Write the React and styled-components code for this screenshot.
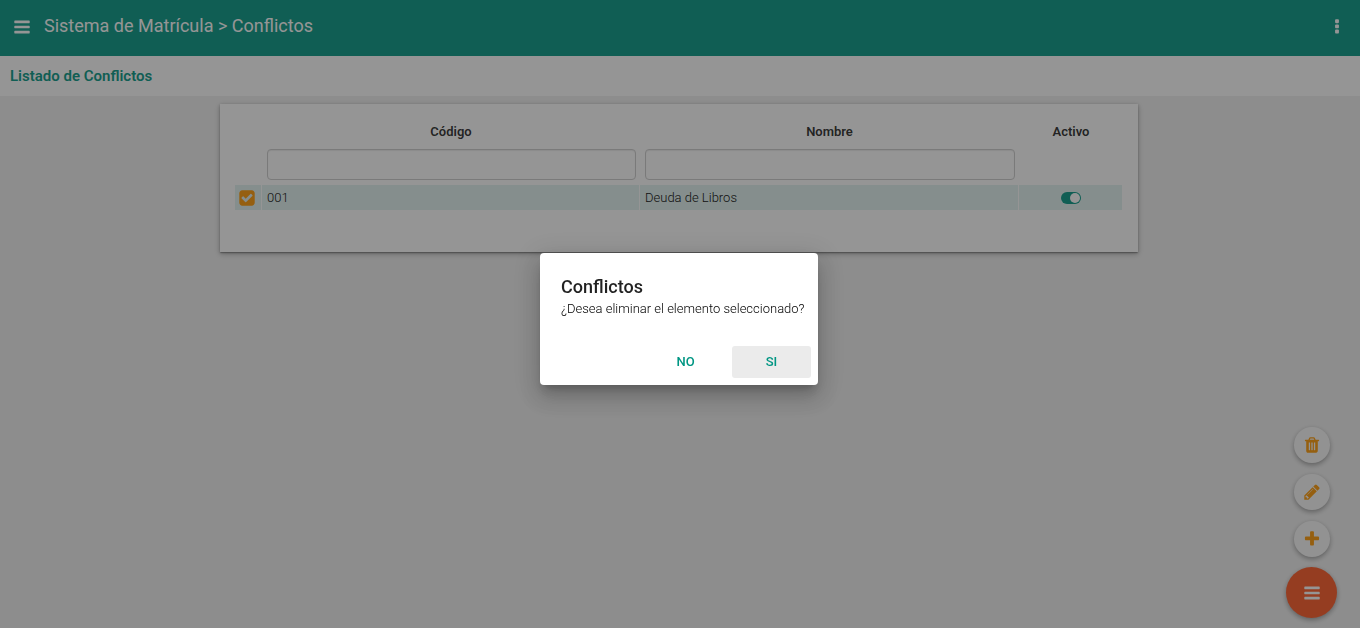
import React, { useState } from "react";
import styled, { createGlobalStyle } from "styled-components";

const teal = "#009683";
const amber = "#ff9800";

const GlobalStyle = createGlobalStyle`
  *, *::before, *::after { box-sizing: border-box; }
  body {
    margin: 0;
    background: #f0f0f0;
    color: rgba(0, 0, 0, 0.87);
    font-family: Roboto, "Liberation Sans", sans-serif;
    font-size: 13px;
    line-height: 20px;
  }
  button, input { font: inherit; }
`;

const Toolbar = styled.header`
  display: flex;
  align-items: center;
  gap: 8px;
  height: 56px;
  padding: 0 14px 2px 13px;
  background: ${teal};
  color: #fff;
`;

const IconButton = styled.button`
  display: flex;
  padding: 0;
  border: 0;
  background: none;
  color: inherit;
  cursor: pointer;
`;

const PageTitle = styled.h1`
  flex: 1;
  margin: 0;
  padding: 0 5px 2px;
  font-size: 18px;
  font-weight: 400;
  line-height: 24px;
`;

const SubHeader = styled.div`
  display: flex;
  align-items: center;
  height: 40px;
  padding: 0 10px;
  background: #fff;
`;

const SubTitle = styled.h2`
  margin: 0;
  color: ${teal};
  font-size: 15px;
  font-weight: 600;
  line-height: 20px;
`;

const Main = styled.main`
  padding: 8px 10px 8px 8px;
`;

const Card = styled.section`
  max-width: 918px;
  margin: 0 auto;
  padding: 16px 16px 42px 15px;
  background: #fff;
  box-shadow: 0 1px 3px rgba(0, 0, 0, 0.2), 0 1px 1px rgba(0, 0, 0, 0.14),
    0 2px 1px -1px rgba(0, 0, 0, 0.12), 0 2px 6px rgba(0, 0, 0, 0.25);
`;

const Table = styled.table`
  width: 100%;
  table-layout: fixed;
  border-collapse: separate;
  border-spacing: 0;
`;

const Col = styled.col`
  width: ${({ $width }) => $width || "auto"};
`;

const HeadCell = styled.th`
  height: 24px;
  padding: 0 0 0 2px;
  font-size: 13px;
  font-weight: 600;
  text-align: center;
`;

const FilterCell = styled.td`
  padding: 5px 3px 5px 6px;
`;

const FilterInput = styled.input`
  display: block;
  width: 100%;
  height: 31px;
  padding: 4px 8px;
  border: 1px solid #ccc;
  border-radius: 4px;
  background: #fff;
  box-shadow: inset 0 1px 1px rgba(0, 0, 0, 0.08);
`;

const Cell = styled.td`
  height: 25px;
  padding: ${({ $first }) => ($first ? "0 3px 0 0" : "0 5px")};
  border-left: ${({ $first }) => ($first ? "0" : "1px solid #fff")};
  background: #e0f2ef;
  color: #000;
  font-weight: 300;
  text-align: ${({ $center }) => ($center ? "center" : "left")};
`;

const Toggle = styled.label`
  display: inline-grid;
  vertical-align: middle;
  color: ${({ $color }) => $color};

  & > * { grid-area: 1 / 1; }
  & > input {
    width: 100%;
    height: 100%;
    margin: 0;
    appearance: none;
    cursor: pointer;
  }
  & > svg { pointer-events: none; }
`;

const Actions = styled.nav`
  position: fixed;
  right: 23px;
  bottom: 10px;
  display: flex;
  flex-direction: column;
  align-items: center;
  gap: 10px;
`;

const ActionList = styled.div`
  display: flex;
  flex-direction: column;
  gap: 11px;
`;

const Fab = styled.button`
  display: flex;
  align-items: center;
  justify-content: center;
  width: ${({ $large }) => ($large ? "51px" : "36px")};
  height: ${({ $large }) => ($large ? "51px" : "36px")};
  padding: 0;
  border: 0;
  border-radius: 50%;
  background: ${({ $large }) => ($large ? "#ff5722" : "#fafafa")};
  color: ${({ $large }) => ($large ? "#fff" : amber)};
  box-shadow: 0 2px 5px rgba(0, 0, 0, 0.36);
  cursor: pointer;
`;

const Backdrop = styled.div`
  position: fixed;
  inset: 0;
  display: flex;
  align-items: center;
  justify-content: center;
  padding: 10px 2px 0 0;
  background: rgba(33, 33, 33, 0.48);
`;

const Dialog = styled.div`
  width: 278px;
  border-radius: 4px;
  background: #fff;
  box-shadow: 0 7px 8px -4px rgba(0, 0, 0, 0.2),
    0 13px 19px 2px rgba(0, 0, 0, 0.14), 0 5px 24px 4px rgba(0, 0, 0, 0.12);
`;

const DialogBody = styled.div`
  padding: 22px 12px 20px 21px;
`;

const DialogTitle = styled.h2`
  margin: 0;
  font-size: 18px;
  font-weight: 500;
  line-height: 24px;
`;

const DialogText = styled.p`
  margin: 0;
  color: #000;
  font-weight: 300;
`;

const DialogActions = styled.div`
  display: flex;
  justify-content: flex-end;
  gap: 7px;
  padding: 7px;
`;

const DialogButton = styled.button`
  width: 79px;
  height: 32px;
  padding: 0;
  border: 0;
  border-radius: 3px;
  background: ${({ $focused }) => ($focused ? "#ebebeb" : "transparent")};
  color: ${teal};
  font-weight: 500;
  text-transform: uppercase;
  cursor: pointer;
`;

const bar = "q0 26-19 45t-45 19h-1408q-26 0-45-19t-19-45v-128q0-26 19-45t45-19h1408q26 0 45 19t19 45z";
const dot = "q0 40-28 68t-68 28h-192q-40 0-68-28t-28-68v-192q0-40 28-68t68-28h192q40 0 68 28t28 68z";
const slot = "v-704q0-14-9-23t-23-9h-64q-14 0-23 9t-9 23v704q0 14 9 23t23 9h64q14 0 23-9t9-23z";

const icons = {
  bars: `M1664 1344v128${bar}M1664 832v128${bar}M1664 320v128${bar}`,
  dots: `M1088 1248v192${dot}M1088 736v192${dot}M1088 224v192${dot}`,
  trash: `M704 1376${slot}M960 1376${slot}M1216 1376${slot}M672 384h448l-48-117q-7-9-17-11h-317q-10 2-17 11zm928 32v64q0 14-9 23t-23 9h-96v948q0 83-47 143.500t-113 60.500h-832q-66 0-113-58.500t-47-141.500v-952h-96q-14 0-23-9t-9-23v-64q0-14 9-23t23-9h309l70-167q15-37 54-63t79-26h320q40 0 79 26t54 63l70 167h309q14 0 23 9t9 23z`,
  pencil:
    "M491 1536l91-91-235-235-91 91v107h128v128h107zm523-928q0-22-22-22-10 0-17 7l-542 542q-7 7-7 17 0 22 22 22 10 0 17-7l542-542q7-7 7-17zm-54-192l416 416-832 832h-416v-416zm683 96q0 53-37 90l-166 166-416-416 166-165q36-38 90-38 53 0 91 38l235 234q37 39 37 91z",
  plus:
    "M1600 736v192q0 40-28 68t-68 28h-416v416q0 40-28 68t-68 28h-192q-40 0-68-28t-28-68v-416h-416q-40 0-68-28t-28-68v-192q0-40 28-68t68-28h416v-416q0-40 28-68t68-28h192q40 0 68 28t28 68v416h416q40 0 68 28t28 68z",
  check:
    "M813 1299l614-614q19-19 19-45t-19-45l-102-102q-19-19-45-19t-45 19l-467 467-211-211q-19-19-45-19t-45 19l-102 102q-19 19-19 45t19 45l358 358q19 19 45 19t45-19zm851-883v960q0 119-84.500 203.500t-203.500 84.500h-960q-119 0-203.500-84.500t-84.500-203.500v-960q0-119 84.500-203.500t203.500-84.500h960q119 0 203.500 84.500t84.500 203.500z",
};

function Icon({ name }) {
  return (
    <svg width="18" height="18" viewBox="0 0 1792 1792" fill="currentColor" aria-hidden="true">
      <path d={icons[name]} fillRule="evenodd" />
    </svg>
  );
}

function SwitchIcon({ on }) {
  return (
    <svg width="20" height="12" viewBox="0 0 20 12" aria-hidden="true">
      <rect width="20" height="12" rx="6" fill="currentColor" />
      <circle cx={on ? 14 : 6} cy="6" r="5" fill="#fff" />
    </svg>
  );
}

export default function App() {
  const [selected, setSelected] = useState(true);
  const [active, setActive] = useState(true);
  const [open, setOpen] = useState(true);

  return (
    <>
      <GlobalStyle />
      <Toolbar>
        <IconButton aria-label="Menú"><Icon name="bars" /></IconButton>
        <PageTitle>Sistema de Matrícula &gt; Conflictos</PageTitle>
        <IconButton aria-label="Opciones"><Icon name="dots" /></IconButton>
      </Toolbar>
      <SubHeader>
        <SubTitle>Listado de Conflictos</SubTitle>
      </SubHeader>
      <Main>
        <Card>
          <Table>
            <colgroup>
              <Col $width="26px" />
              <Col $width="378px" />
              <Col />
              <Col $width="104px" />
            </colgroup>
            <thead>
              <tr>
                <HeadCell as="td" />
                <HeadCell scope="col">Código</HeadCell>
                <HeadCell scope="col">Nombre</HeadCell>
                <HeadCell scope="col">Activo</HeadCell>
              </tr>
              <tr>
                <FilterCell />
                <FilterCell><FilterInput type="text" aria-label="Código" /></FilterCell>
                <FilterCell><FilterInput type="text" aria-label="Nombre" /></FilterCell>
                <FilterCell />
              </tr>
            </thead>
            <tbody>
              <tr>
                <Cell $first $center>
                  <Toggle $color={amber}>
                    <input
                      type="checkbox"
                      aria-label="Seleccionar"
                      checked={selected}
                      onChange={(e) => setSelected(e.target.checked)}
                    />
                    <Icon name="check" />
                  </Toggle>
                </Cell>
                <Cell>001</Cell>
                <Cell>Deuda de Libros</Cell>
                <Cell $center>
                  <Toggle $color={teal}>
                    <input
                      type="checkbox"
                      role="switch"
                      aria-label="Activo"
                      checked={active}
                      onChange={(e) => setActive(e.target.checked)}
                    />
                    <SwitchIcon on={active} />
                  </Toggle>
                </Cell>
              </tr>
            </tbody>
          </Table>
        </Card>
      </Main>
      <Actions aria-label="Acciones">
        <ActionList>
          <Fab aria-label="Eliminar" onClick={() => setOpen(true)}><Icon name="trash" /></Fab>
          <Fab aria-label="Editar"><Icon name="pencil" /></Fab>
          <Fab aria-label="Agregar"><Icon name="plus" /></Fab>
        </ActionList>
        <Fab $large aria-label="Acciones"><Icon name="bars" /></Fab>
      </Actions>
      {open && (
        <Backdrop>
          <Dialog role="dialog" aria-modal="true" aria-labelledby="dialog-title">
            <DialogBody>
              <DialogTitle id="dialog-title">Conflictos</DialogTitle>
              <DialogText>¿Desea eliminar el elemento seleccionado?</DialogText>
            </DialogBody>
            <DialogActions>
              <DialogButton onClick={() => setOpen(false)}>No</DialogButton>
              <DialogButton $focused onClick={() => setOpen(false)}>Si</DialogButton>
            </DialogActions>
          </Dialog>
        </Backdrop>
      )}
    </>
  );
}
